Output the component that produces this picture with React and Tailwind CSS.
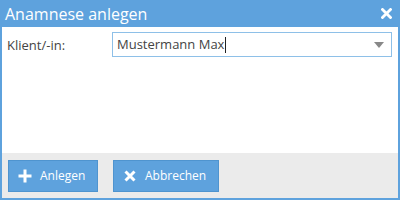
import React from "react";

export default function App() {
  return (
    <div className="w-[400px] h-[200px] bg-[#5ea2dd] flex flex-col px-[2px] pb-[2px]" style={{ fontFamily: '"Open Sans", sans-serif' }}>
      <div className="h-[27px] flex items-center justify-between pl-[3px] pr-[6px]">
        <span className="text-white text-[16px] leading-none">Anamnese anlegen</span>
        <svg width="11" height="11" viewBox="0 0 11 11">
          <path d="M1.5 1.5 L9.5 9.5 M9.5 1.5 L1.5 9.5" stroke="#fff" strokeWidth="2.8" strokeLinecap="square" />
        </svg>
      </div>
      <div className="flex-1 bg-white flex flex-col">
        <div className="flex items-start pt-[5px]">
          <div className="w-[110px] pl-[5px] pt-[4px] text-[13px] text-[#444]">Klient/-in:</div>
          <div className="w-[280px] h-[25px] border border-[#8ec0e8] flex items-center justify-between pl-[4px] pr-[7px]">
            <span className="text-[13px] text-[#444] flex items-center">Mustermann Max<span className="inline-block w-px h-[16px] bg-[#222] ml-[1px]"></span></span>
            <svg width="10" height="6" viewBox="0 0 10 6"><path d="M0 0 L10 0 L5 6 Z" fill="#888" /></svg>
          </div>
        </div>
      </div>
      <div className="h-[45px] bg-[#ebebeb] flex items-start pt-[7px] pl-[6px] gap-[15px]">
        <button className="w-[90px] h-[32px] bg-[#5ea2dd] border border-[#4f94cf] text-white text-[12px] flex items-center gap-[8px] pl-[9px]">
          <svg width="14" height="14" viewBox="0 0 14 14"><path d="M7 0.5 V13.5 M0.5 7 H13.5" stroke="#fff" strokeWidth="3" /></svg>
          <span>Anlegen</span>
        </button>
        <button className="w-[106px] h-[32px] bg-[#5ea2dd] border border-[#4f94cf] text-white text-[12px] flex items-center gap-[9px] pl-[10px]">
          <svg width="12" height="12" viewBox="0 0 12 12"><path d="M1.5 1.5 L10.5 10.5 M10.5 1.5 L1.5 10.5" stroke="#fff" strokeWidth="3" /></svg>
          <span>Abbrechen</span>
        </button>
      </div>
    </div>
  );
}
